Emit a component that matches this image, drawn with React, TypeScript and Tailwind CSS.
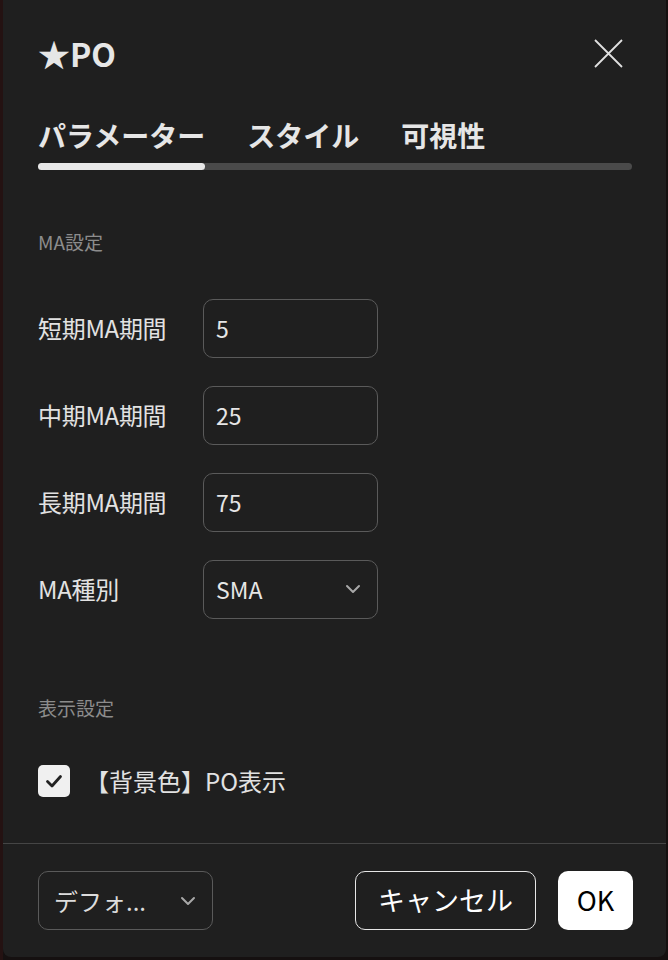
import { ChevronDown } from "lucide-react"

const font = { fontFamily: '"Noto Sans CJK JP", "Noto Sans", sans-serif' }

const fields = [
  { label: "短期MA期間", value: "5" },
  { label: "中期MA期間", value: "25" },
  { label: "長期MA期間", value: "75" },
]

function Row({ label, children }: { label: string; children: React.ReactNode }) {
  return (
    <div className="flex items-center h-[58px]">
      <div className="w-[165px] text-[24px] text-[#e2e2e2] tracking-[-0.3px]">{label}</div>
      {children}
    </div>
  )
}

export default function App() {
  return (
    <div className="min-h-[960px] bg-[#151010] flex" style={font}>
      <div className="w-[3px] bg-[#241212]" />
      <div className="w-[663px] h-[957px] bg-[#1f1f1f] rounded-b-[8px] flex flex-col text-[#e6e6e6]">
        <div className="px-[35px]">
          {/* header */}
          <div className="h-[106px] flex items-center justify-between">
            <h1 className="text-[32px] font-bold leading-none">★PO</h1>
            <svg width="30" height="30" viewBox="0 0 30 30" className="mr-[8px]">
              <path d="M2 2 L29 29 M29 2 L2 29" stroke="#e0e0e0" strokeWidth="1.8" />
            </svg>
          </div>

          {/* tabs */}
          <div className="mt-[11px] flex gap-[42px] text-[28px] font-bold leading-[36px]">
            <span>パラメーター</span>
            <span>スタイル</span>
            <span>可視性</span>
          </div>
          <div className="mt-[10px] mr-[-1px] h-[7px] rounded-full bg-[#4a4a4a] flex">
            <div className="w-[167px] h-full rounded-full bg-[#e8e8e8]" />
          </div>

          <div className="mt-[58px] text-[19px] leading-[28px] text-[#8c8c8c]">MA設定</div>

          <div className="mt-[43px] flex flex-col gap-[29px]">
            {fields.map((f) => (
              <Row key={f.label} label={f.label}>
                <div className="w-[175px] h-[59px] rounded-[10px] border border-[#5a5a5a] flex items-center px-[12px] text-[23px]">
                  {f.value}
                </div>
              </Row>
            ))}
            <Row label="MA種別">
              <div className="w-[175px] h-[59px] rounded-[10px] border border-[#5a5a5a] flex items-center justify-between pl-[12px] pr-[12px] text-[23px]">
                <span>SMA</span>
                <ChevronDown size={24} strokeWidth={2} color="#a8a8a8" />
              </div>
            </Row>
          </div>

          <div className="mt-[76px] text-[19px] leading-[28px] text-[#8c8c8c]">表示設定</div>

          <div className="mt-[43px] flex items-center h-[32px]">
            <div className="w-[32px] h-[32px] rounded-[5px] bg-[#f0f0f0] flex items-center justify-center">
              <svg width="18" height="18" viewBox="0 0 18 18">
                <path d="M2.5 9.5 L7 14 L15.5 4.5" fill="none" stroke="#222" strokeWidth="2.8" strokeLinecap="round" strokeLinejoin="round" />
              </svg>
            </div>
            <span className="ml-[15px] text-[24px] text-[#e2e2e2]">【背景色】PO表示</span>
          </div>
        </div>

        <div className="mt-[46px] h-px bg-[#454545]" />

        <div className="mt-[27px] pl-[35px] pr-[33px] flex items-center">
          <div className="w-[175px] h-[59px] rounded-[10px] border border-[#5a5a5a] flex items-center justify-between pl-[15px] pr-[12px] text-[24px] text-[#dcdcdc]">
            <span>デフォ...</span>
            <ChevronDown size={24} strokeWidth={2} color="#a8a8a8" />
          </div>
          <div className="ml-auto flex gap-[22px]">
            <button className="w-[181px] h-[59px] rounded-[10px] border border-[#e6e6e6] text-[27px] text-white">
              キャンセル
            </button>
            <button className="w-[75px] h-[59px] rounded-[10px] bg-white text-[27px] text-black">OK</button>
          </div>
        </div>
      </div>
    </div>
  )
}
